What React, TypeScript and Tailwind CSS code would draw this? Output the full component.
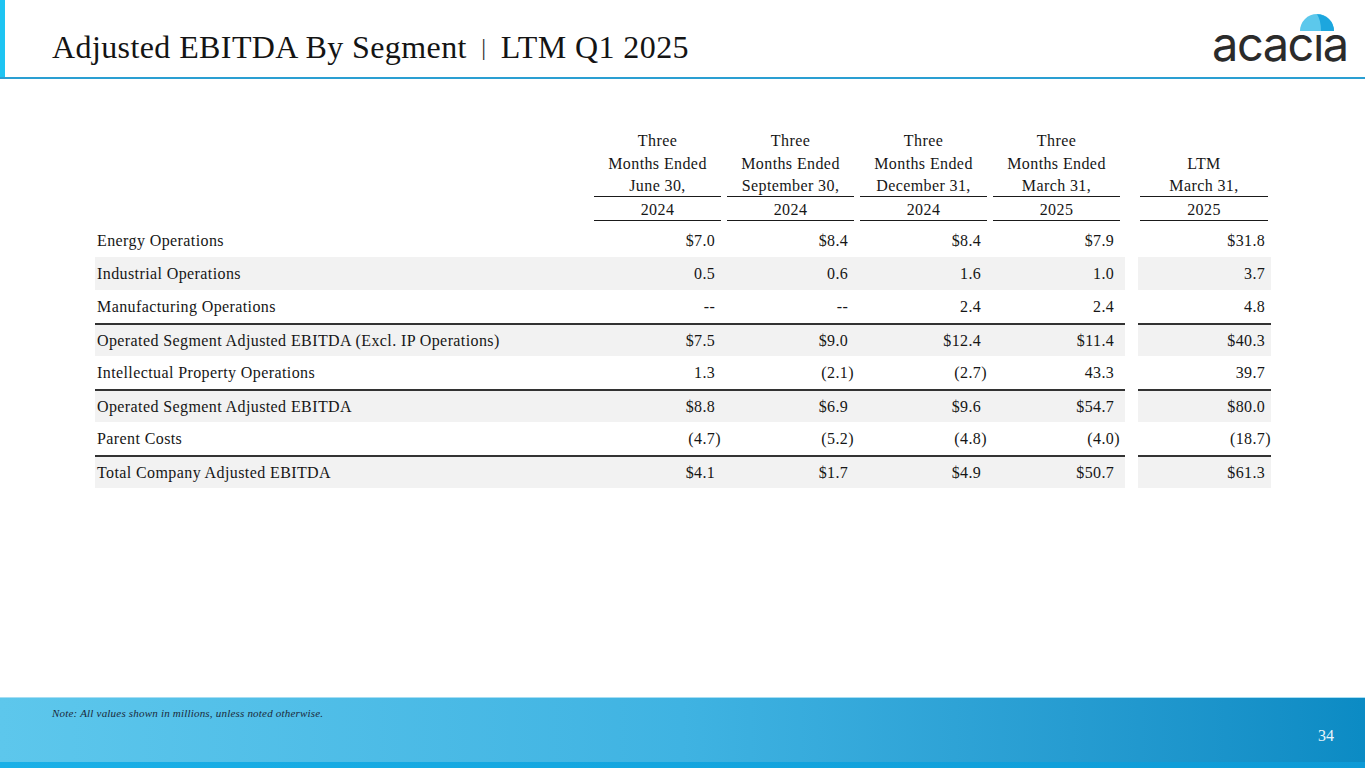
import React from "react";

const serif = { fontFamily: '"Liberation Serif", "DejaVu Serif", serif' };

type Row = { label: string; v: string[]; ltm: string; shaded: boolean; border: boolean };

const rows: Row[] = [
  { label: "Energy Operations", v: ["$7.0", "$8.4", "$8.4", "$7.9"], ltm: "$31.8", shaded: false, border: false },
  { label: "Industrial Operations", v: ["0.5", "0.6", "1.6", "1.0"], ltm: "3.7", shaded: true, border: false },
  { label: "Manufacturing Operations", v: ["--", "--", "2.4", "2.4"], ltm: "4.8", shaded: false, border: false },
  { label: "Operated Segment Adjusted EBITDA (Excl. IP Operations)", v: ["$7.5", "$9.0", "$12.4", "$11.4"], ltm: "$40.3", shaded: true, border: true },
  { label: "Intellectual Property Operations", v: ["1.3", "(2.1)", "(2.7)", "43.3"], ltm: "39.7", shaded: false, border: false },
  { label: "Operated Segment Adjusted EBITDA", v: ["$8.8", "$6.9", "$9.6", "$54.7"], ltm: "$80.0", shaded: true, border: true },
  { label: "Parent Costs", v: ["(4.7)", "(5.2)", "(4.8)", "(4.0)"], ltm: "(18.7)", shaded: false, border: false },
  { label: "Total Company Adjusted EBITDA", v: ["$4.1", "$1.7", "$4.9", "$50.7"], ltm: "$61.3", shaded: true, border: true },
];

const headers = [
  ["Three", "Months Ended", "June 30,", "2024"],
  ["Three", "Months Ended", "September 30,", "2024"],
  ["Three", "Months Ended", "December 31,", "2024"],
  ["Three", "Months Ended", "March 31,", "2025"],
];

function Num({ value }: { value: string }) {
  const paren = value.endsWith(")");
  return (
    <span className="whitespace-nowrap">
      {value}
      {!paren && <span className="invisible">)</span>}
    </span>
  );
}

function HeaderCell({ lines, w }: { lines: string[]; w: string }) {
  return (
    <div className={`flex flex-col ${w}`}>
      <div className="h-[23px] leading-[23px] text-center whitespace-nowrap">{lines[0]}</div>
      <div className="h-[23px] leading-[23px] text-center whitespace-nowrap">{lines[1]}</div>
      <div className="h-[22px] leading-[22px] text-center whitespace-nowrap border-b-[1.5px] border-[#1a1a1a]">{lines[2]}</div>
      <div className="h-[24px] leading-[25px] text-center border-b-[1.5px] border-[#1a1a1a]">{lines[3]}</div>
    </div>
  );
}

function Logo() {
  return (
    <div className="relative w-[134px] h-[77px]">
      <svg className="absolute left-[88px] top-[14px]" width="34" height="17" viewBox="0 0 34 17">
        <path d="M0 17 A17 17 0 0 1 34 17 Z" fill="#5cc8ec" />
        <path d="M17 0.2 A17 17 0 0 1 34 17 L21 17 Q21 6 17 0.2 Z" fill="#1ca6de" />
      </svg>
      <div
        className="absolute left-0 top-[20px] text-[47px] leading-[48px] text-[#2b2b2b] tracking-[-1.5px]"
        style={{ fontFamily: 'Inter, "DejaVu Sans", sans-serif', fontWeight: 400 }}
      >
        acac{"\u0131"}a
      </div>
    </div>
  );
}

export default function App() {
  return (
    <div className="w-[1365px] h-[768px] bg-white flex flex-col overflow-hidden text-[#161616]" style={serif}>
      {/* Header */}
      <div className="h-[79px] flex border-b-2 border-[#2a9fd2] shrink-0">
        <div className="w-[5px] bg-[#1ec4f2]" />
        <div className="pl-[47px] pt-[27px] text-[32px] leading-[40px] text-[#141414] whitespace-nowrap tracking-[0.4px]">
          Adjusted EBITDA By Segment <span className="text-[24px] relative top-[-3px] px-[6px] text-[#333]">|</span> LTM Q1 2025
        </div>
        <div className="ml-auto mr-[19px]">
          <Logo />
        </div>
      </div>

      {/* Table */}
      <div className="flex-1 pt-[50px] pl-[95px] text-[16px] tracking-[0.4px]">
        {/* Header rows */}
        <div className="flex">
          <div className="flex w-[1030px] pr-[5px]">
            <div className="w-[499px]" />
            <div className="flex gap-[6px]">
              {headers.map((h, i) => (
                <HeaderCell key={i} lines={h} w="w-[127px]" />
              ))}
            </div>
          </div>
          <div className="ml-[13px] w-[133px] pl-[2px] pr-[3px]">
            <HeaderCell lines={["", "LTM", "March 31,", "2025"]} w="w-[128px]" />
          </div>
        </div>

        <div className="h-[3px]" />

        {rows.map((r, i) => (
          <div key={i} className="flex h-[33px]">
            <div
              className={`flex items-center w-[1030px] pr-[5px] ${r.shaded ? "bg-[#f2f2f2]" : ""} ${
                r.border ? "border-t-2 border-[#333333]" : ""
              }`}
            >
              <div className="w-[499px] pl-[2px] whitespace-nowrap">{r.label}</div>
              <div className="flex gap-[6px]">
                {r.v.map((v, j) => (
                  <div key={j} className="w-[127px] text-right">
                    <Num value={v} />
                  </div>
                ))}
              </div>
            </div>
            <div
              className={`ml-[13px] w-[133px] flex items-center justify-end ${r.shaded ? "bg-[#f2f2f2]" : ""} ${
                r.border ? "border-t-2 border-[#333333]" : ""
              }`}
            >
              <Num value={r.ltm} />
            </div>
          </div>
        ))}
      </div>

      {/* Footer */}
      <div className="h-[71px] shrink-0 flex flex-col">
        <div className="flex-1 bg-linear-to-r from-[#5dc7ec] via-[#3fb3e2] to-[#0b8bc4] border-t border-[#a6def3] relative">
          <div className="pl-[52px] pt-[7px] text-[11px] tracking-[0.2px] italic text-[#1b2a3a]">
            Note: All values shown in millions, unless noted otherwise.
          </div>
          <div className="absolute right-[31px] top-[26px] text-[16px] text-[#eaf6fb]">34</div>
        </div>
        <div className="h-[6px] bg-linear-to-r from-[#1ab0e7] to-[#0d9ad6]" />
      </div>
    </div>
  );
}
